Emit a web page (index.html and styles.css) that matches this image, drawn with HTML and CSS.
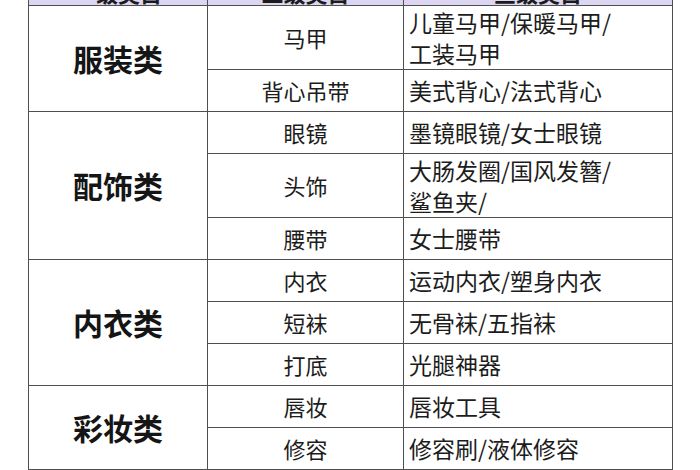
FILE: index.html
```html
<!DOCTYPE html>
<html lang="zh">
<head>
<meta charset="utf-8">
<title>类目表</title>
<link rel="stylesheet" href="styles.css">
</head>
<body>
<table class="cat-table">
  <colgroup>
    <col class="c1">
    <col class="c2">
    <col class="c3">
  </colgroup>
  <thead>
    <tr class="head">
      <th>一级类目</th>
      <th>二级类目</th>
      <th>三级类目</th>
    </tr>
  </thead>
  <tbody>
    <tr class="r2">
      <td class="cat" rowspan="2">服装类</td>
      <td class="sub">马甲</td>
      <td class="items">儿童马甲/保暖马甲/<br>工装马甲</td>
    </tr>
    <tr class="r1">
      <td class="sub">背心吊带</td>
      <td class="items">美式背心/法式背心</td>
    </tr>
    <tr class="r1">
      <td class="cat" rowspan="3">配饰类</td>
      <td class="sub">眼镜</td>
      <td class="items">墨镜眼镜/女士眼镜</td>
    </tr>
    <tr class="r2">
      <td class="sub">头饰</td>
      <td class="items">大肠发圈/国风发簪/<br>鲨鱼夹/</td>
    </tr>
    <tr class="r1">
      <td class="sub">腰带</td>
      <td class="items">女士腰带</td>
    </tr>
    <tr class="r1">
      <td class="cat" rowspan="3">内衣类</td>
      <td class="sub">内衣</td>
      <td class="items">运动内衣/塑身内衣</td>
    </tr>
    <tr class="r1">
      <td class="sub">短袜</td>
      <td class="items">无骨袜/五指袜</td>
    </tr>
    <tr class="r1">
      <td class="sub">打底</td>
      <td class="items">光腿神器</td>
    </tr>
    <tr class="r1">
      <td class="cat" rowspan="2">彩妆类</td>
      <td class="sub">唇妆</td>
      <td class="items">唇妆工具</td>
    </tr>
    <tr class="r1">
      <td class="sub">修容</td>
      <td class="items">修容刷/液体修容</td>
    </tr>
  </tbody>
</table>
</body>
</html>
```

FILE: styles.css
```css
html, body {
  margin: 0;
  padding: 0;
  background: #ffffff;
  overflow: hidden;
}

body {
  font-family: "Noto Sans CJK SC", "Noto Sans", sans-serif;
  color: #1c1c1c;
}

.cat-table {
  margin-top: -26px;
  margin-left: 28px;
  border-collapse: collapse;
  table-layout: fixed;
  width: 644px;
}

.c1 { width: 179px; }
.c2 { width: 196px; }
.c3 { width: 269px; }

.cat-table th,
.cat-table td {
  border: 1px solid #4f4f4f;
  padding: 0;
  font-size: 22px;
  line-height: 31px;
}

.cat-table .head th {
  height: 24px;
  background: #dcd6f2;
  font-weight: 700;
  text-align: center;
  line-height: 22px;
  padding-top: 6px;
  vertical-align: top;
}

.cat-table .r1 td { height: 41px; }
.cat-table .r2 td { height: 63px; }

.cat-table .cat {
  text-align: center;
  font-size: 30px;
  font-weight: 700;
  color: #151515;
}

.cat-table .sub {
  text-align: center;
}

.cat-table .items {
  text-align: left;
  padding-left: 5px;
  font-size: 23px;
}
```
